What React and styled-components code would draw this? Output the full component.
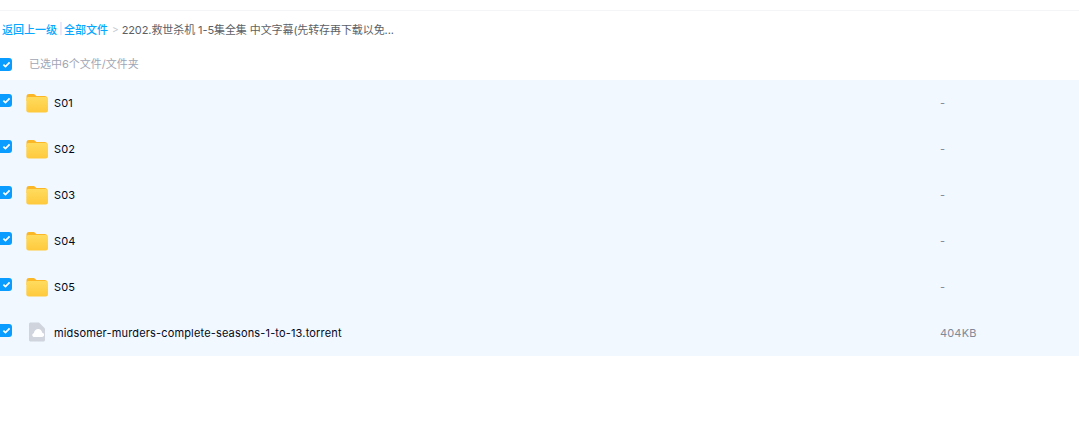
import React from "react";
import styled, { createGlobalStyle } from "styled-components";

const Global = createGlobalStyle`
  html, body { margin: 0; padding: 0; background: #fff; }
  body { font-family: "Inter", "Noto Sans CJK SC", sans-serif; font-size: 11px; }
`;
const Page = styled.div`
  width: 1079px; height: 445px; overflow: hidden; background: #fff; padding-top: 10px; box-sizing: border-box;
`;
const Breadcrumb = styled.div`
  border-top: 1px solid #f4f5f6;
  height: 35px; display: flex; align-items: center; padding-left: 2px; color: #5c5f66; white-space: nowrap;
`;
const Back = styled.a`color: #06a7ff; font-weight: 500;`;
const Sep = styled.span`color: #c4d8f4; margin: 0 2px 0 2px; width: 3px;`;
const Arrow = styled.span`color: #c4c8d0; margin: 0 3px 0 4px; font-size: 10px;`;
const Title = styled.span`letter-spacing: -.09px;`;
const Header = styled.div`
  height: 34px; display: flex; align-items: center; color: #a0a6b4;
`;
const Box = styled.span`
  width: 12px; height: 13px; border-radius: 0 3px 3px 0; background: #0a9cff; display: flex; align-items: center; justify-content: center; flex: none;
  position: relative; top: ${p => p.$shift}px;
`;
const HeaderLabel = styled.span`margin-left: 17px;`;
const List = styled.div`background: #f1f8ff;`;
const Row = styled.div`
  height: 46px; display: flex; align-items: center;
`;
const IconSlot = styled.span`
  width: 22px; height: 22px; margin-left: 14px; flex: none; display: flex; position: relative; top: ${p => p.$top}px;
`;
const Name = styled.span`margin-left: 6px; flex: 1; color: #03081a; letter-spacing: .16px;`;
const Size = styled.span`width: 139px; flex: none; color: #818999; letter-spacing: .16px;`;

const Check = ({ shift }) => (
  <Box $shift={shift}>
    <svg width="9" height="9" viewBox="0 0 9 9"><path d="M1.400 4.600 3.500 6.600 7.600 2.400" fill="none" stroke="#fff" strokeWidth="1.7" /></svg>
  </Box>
);
const Folder = ({ id }) => (
  <svg width="22" height="20" viewBox="0 0 22 20">
    <defs>
      <linearGradient id={id} x1="0" y1="0" x2="0" y2="1">
        <stop offset="0" stopColor="#ffdc5e" />
        <stop offset="1" stopColor="#ffc93c" />
      </linearGradient>
    </defs>
    <path d="M.5 3.500C.5 1.800 1.500 1 3 1h5l2.500 2h8c2 0 3 1 3 3v2H.5z" fill="#fbb726" />
    <rect x="0.300" y="4" width="21.700" height="15.500" rx="2.500" fill={`url(#${id})`} />
  </svg>
);
const Torrent = () => (
  <svg width="22" height="22" viewBox="0 0 22 22">
    <path d="M3 2C3 1 3.700.4 4.500.4H13l6 6V18c0 .9-.7 1.500-1.500 1.500h-13C3.700 19.500 3 18.900 3 18z" fill="#d0d4dd" />
    <path d="M8.500 15c-2.600 0-3-3.300-.6-3.800C8.200 9 9.900 7 12.200 7c2.200 0 3.700 1.700 4 3.800 2.700.3 2.500 4.200-.2 4.200z" fill="#fff" />
  </svg>
);
const items = [
  ["S01", "-"], ["S02", "-"], ["S03", "-"], ["S04", "-"], ["S05", "-"],
  ["midsomer-murders-complete-seasons-1-to-13.torrent", "404KB"],
];
export default function App() {
  return (
    <Page>
      <Global />
      <Breadcrumb>
        <Back>返回上一级</Back><Sep>|</Sep><Back>全部文件</Back><Arrow>&gt;</Arrow>
        <Title>2202.救世杀机 1-5集全集 中文字幕(先转存再下载以免...</Title>
      </Breadcrumb>
      <Header><Check shift={1} /><HeaderLabel>已选中6个文件/文件夹</HeaderLabel></Header>
      <List>
        {items.map(([n, s], i) => (
          <Row key={n}>
            <Check shift={-3} />
            <IconSlot $top={i < 5 ? 1 : 0}>{i < 5 ? <Folder id={`folder-fill-${i}`} /> : <Torrent />}</IconSlot>
            <Name>{n}</Name>
            <Size>{s}</Size>
          </Row>
        ))}
      </List>
    </Page>
  );
}
